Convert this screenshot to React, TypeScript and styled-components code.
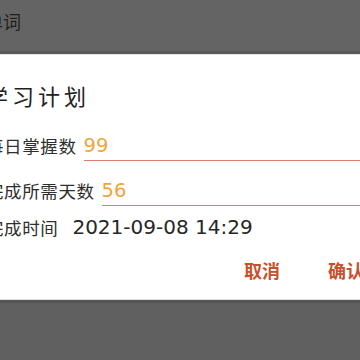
import React from "react";
import styled, { createGlobalStyle } from "styled-components";

const GlobalStyle = createGlobalStyle`
  html, body { margin: 0; padding: 0; background: #636363; overflow: hidden; }
  body { font-family: Roboto, "Noto Sans CJK SC", sans-serif; }
`;

const Page = styled.div`
  width: 360px;
  height: 360px;
  display: flex;
  flex-direction: column;
  overflow: hidden;
  background: #626262;
`;

const TopBar = styled.div`
  height: 51px;
  flex: none;
  background: #646464;
  border-bottom: 3px solid #585858;
  display: flex;
  align-items: center;
`;

const BarTitle = styled.span`
  margin-left: -15px;
  font-size: 18px;
  color: #1f1f1f;
  font-family: "Noto Sans CJK SC", sans-serif;
  line-height: 22px;
  padding-bottom: 10px;
`;

const Dialog = styled.div`
  height: 246px;
  flex: none;
  background: #ffffff;
  border-top: 1px solid #e2e2e2;
  border-bottom: 1px solid #dedede;
  display: flex;
  flex-direction: column;
  box-sizing: border-box;
`;

const Content = styled.div`
  margin-left: -14px;
  display: flex;
  flex-direction: column;
`;

const Title = styled.div`
  margin-top: 27px;
  font-size: 22px;
  line-height: 26px;
  letter-spacing: 4px;
  color: #222;
  font-family: "Noto Sans CJK SC", sans-serif;
`;

const FieldRow = styled.div<{ $top: number }>`
  margin-top: ${(p) => p.$top}px;
  height: 30px;
  display: flex;
  align-items: flex-end;
`;

const Label = styled.span`
  font-size: 17.5px;
  line-height: 24px;
  color: #2e2e2e;
  font-family: "Noto Sans CJK SC", sans-serif;
  padding-bottom: 3px;
  letter-spacing: 0.6px;
`;

const Input = styled.div`
  flex: 1;
  margin-left: 7px;
  border-bottom: 1.5px solid #d8806a;
  font-size: 19.5px;
  line-height: 24px;
  color: #f0a53a;
  font-family: "DejaVu Sans", sans-serif;
  padding-bottom: 2px;
`;

const TimeRow = styled.div`
  margin-top: 7px;
  height: 28px;
  display: flex;
  align-items: center;
  gap: 14px;
`;

const TimeLabel = styled.span`
  font-size: 17.5px;
  color: #2e2e2e;
  font-family: "Noto Sans CJK SC", sans-serif;
  letter-spacing: 0.6px;
`;

const TimeValue = styled.span`
  font-size: 20px;
  color: #262626;
  font-family: "DejaVu Sans", sans-serif;
`;

const Actions = styled.div`
  margin-top: 18px;
  display: flex;
  justify-content: flex-end;
  gap: 48px;
  margin-right: -4px;
`;

const ActionButton = styled.span`
  font-size: 18px;
  line-height: 22px;
  font-weight: 700;
  color: #c8502c;
  font-family: "Noto Sans CJK SC", sans-serif;
`;

const Bottom = styled.div`
  flex: 1;
  background: #606060;
  border-top: 3px solid #555555;
`;

export default function App() {
  return (
    <>
      <GlobalStyle />
      <Page>
        <TopBar>
          <BarTitle>单词</BarTitle>
        </TopBar>
        <Dialog>
          <Content>
            <Title>学习计划</Title>
            <FieldRow $top={23}>
              <Label>每日掌握数</Label>
              <Input>99</Input>
            </FieldRow>
            <FieldRow $top={15}>
              <Label>完成所需天数</Label>
              <Input>56</Input>
            </FieldRow>
            <TimeRow>
              <TimeLabel>完成时间</TimeLabel>
              <TimeValue>2021-09-08 14:29</TimeValue>
            </TimeRow>
          </Content>
          <Actions>
            <ActionButton>取消</ActionButton>
            <ActionButton>确认</ActionButton>
          </Actions>
        </Dialog>
        <Bottom />
      </Page>
    </>
  );
}
